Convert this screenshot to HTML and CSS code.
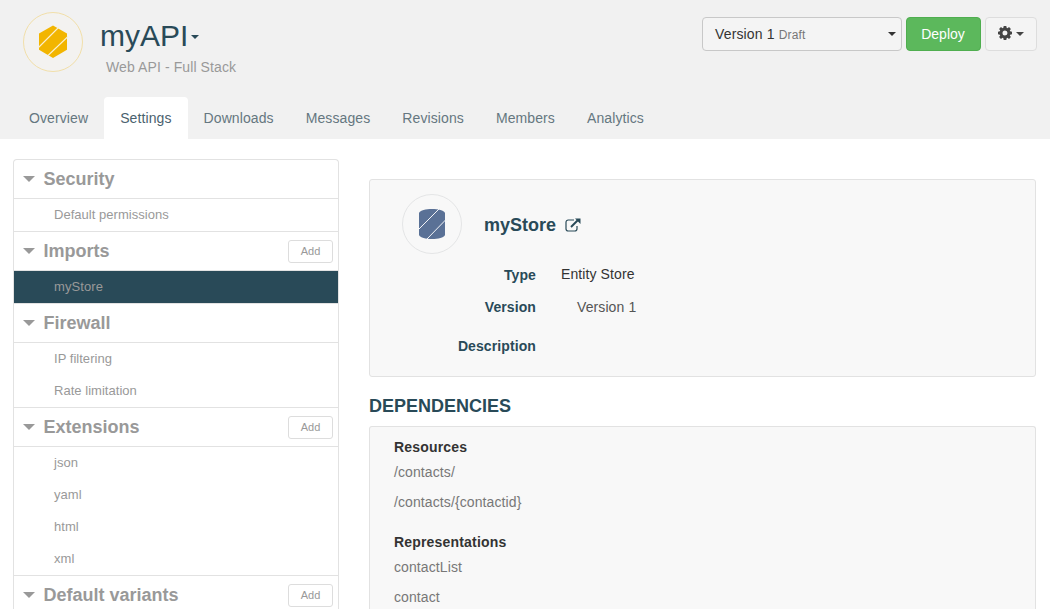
FILE: index.html
```html
<!DOCTYPE html>
<html lang="en">
<head>
<meta charset="utf-8">
<title>myAPI - Settings</title>
<link rel="stylesheet" href="styles.css">
</head>
<body>
<header class="header">
  <div class="header-main">
    <svg class="api-logo" viewBox="0 0 60 60" width="60" height="60">
      <circle cx="30" cy="30" r="29.5" fill="#f3f2f0" stroke="#f1dfa9"/>
      <path d="M30 13.500 44 21.500V37.800L30 46 16 37.800V21.500Z" fill="#f2b500"/>
      <path d="M15.500 35.500 35.500 15.500M25 43.500 45 24.500" stroke="#fbf0cf" stroke-width="1.100"/>
    </svg>
    <div class="identity">
      <h1 class="api-name"><span>myAPI</span><i class="caret"></i></h1>
      <p class="api-kind">Web API - Full Stack</p>
    </div>
    <div class="actions">
      <button class="btn version-select"><span>Version 1 <small>Draft</small></span><i class="caret"></i></button>
      <button class="btn deploy">Deploy</button>
      <button class="btn gear" aria-label="Options">
        <svg viewBox="0 0 14 14" width="14" height="14">
          <path fill="#444" fill-rule="evenodd" d="M5.700 0h2.600l.35 1.800.8.35 1.600-1.100 1.850 1.850-1.100 1.600.35.800 1.850.4v2.600l-1.850.35-.35.800 1.100 1.600-1.850 1.850-1.600-1.100-.8.35L8.300 14H5.700l-.35-1.850-.8-.35-1.600 1.100L1.100 11.050l1.100-1.600-.35-.8L0 8.300V5.700l1.850-.4.35-.8-1.100-1.600L2.950 1.050l1.600 1.100.8-.35ZM7 4.500a2.500 2.500 0 1 0 0 5 2.500 2.500 0 0 0 0-5Z"/>
        </svg>
        <i class="caret"></i>
      </button>
    </div>
  </div>
  <nav class="tabs">
    <a class="tab">Overview</a>
    <a class="tab active">Settings</a>
    <a class="tab">Downloads</a>
    <a class="tab">Messages</a>
    <a class="tab">Revisions</a>
    <a class="tab">Members</a>
    <a class="tab">Analytics</a>
  </nav>
</header>
<main class="content">
  <aside class="sidebar">
    <section class="group">
      <h2 class="group-head"><i class="toggle"></i><span>Security</span></h2>
      <ul class="items"><li>Default permissions</li></ul>
    </section>
    <section class="group">
      <h2 class="group-head"><i class="toggle"></i><span>Imports</span><button class="add">Add</button></h2>
      <ul class="items"><li class="selected">myStore</li></ul>
    </section>
    <section class="group">
      <h2 class="group-head"><i class="toggle"></i><span>Firewall</span></h2>
      <ul class="items"><li>IP filtering</li><li>Rate limitation</li></ul>
    </section>
    <section class="group">
      <h2 class="group-head"><i class="toggle"></i><span>Extensions</span><button class="add">Add</button></h2>
      <ul class="items"><li>json</li><li>yaml</li><li>html</li><li>xml</li></ul>
    </section>
    <section class="group">
      <h2 class="group-head"><i class="toggle"></i><span>Default variants</span><button class="add">Add</button></h2>
    </section>
  </aside>
  <div class="details">
    <section class="panel store">
      <div class="store-head">
        <svg class="store-logo" viewBox="0 0 60 60" width="60" height="60">
          <circle cx="30" cy="30" r="29.500" fill="#f8f8f8" stroke="#e4e5e6"/>
          <path d="M17 19C19 13.700 41 13.700 43 19V41C41 46.300 19 46.300 17 41Z" fill="#5a7196"/>
          <path d="M16.500 35.500 37 15M25 45 43.500 26" stroke="#f2f4f8" stroke-width="1"/>
        </svg>
        <h2 class="store-name">myStore</h2>
        <svg class="external" viewBox="0 0 16 14" width="16" height="14" fill="none" stroke="#294a58">
          <path d="M9 2H3.200A2.200 2.200 0 0 0 1 4.200v6.600A2.200 2.200 0 0 0 3.200 13h6.600A2.200 2.200 0 0 0 12 10.800V8" stroke-width="1.200"/>
          <path d="M6 9 13 2" stroke-width="1.900"/>
          <path d="M10 .5H15.500V6Z" fill="#294a58" stroke="none"/>
        </svg>
      </div>
      <dl class="fields">
        <dt>Type</dt><dd class="type">Entity Store</dd>
        <dt>Version</dt><dd class="version">Version 1</dd>
        <dt class="desc">Description</dt><dd></dd>
      </dl>
    </section>
    <h2 class="section-title">DEPENDENCIES</h2>
    <section class="panel dependencies">
      <h3>Resources</h3>
      <ul><li>/contacts/</li><li>/contacts/{contactid}</li></ul>
      <h3>Representations</h3>
      <ul><li>contactList</li><li>contact</li></ul>
    </section>
  </div>
</main>
</body>
</html>
```
FILE: styles.css
```css
* { box-sizing: border-box; }
body {
  margin: 0;
  height: 609px;
  overflow: hidden;
  background: #fff;
  color: #333;
  font: 14px/20px "Liberation Sans", Arial, sans-serif;
}
h1, h2, h3, p, ul, dl, dd { margin: 0; padding: 0; }
ul { list-style: none; }
button { font: inherit; color: inherit; padding: 0; }
svg { display: block; flex: none; }

.caret {
  flex: none;
  border: 4px solid transparent;
  border-top-color: currentColor;
  border-bottom: 0;
}

.header { height: 139px; background: #f1f1f1; }
.header-main { display: flex; height: 97px; padding: 12px 13px 0 23px; }
.identity { margin-left: 17px; }
.api-name {
  display: flex;
  align-items: center;
  gap: 3px;
  margin-top: 4px;
  color: #294a58;
  font-weight: 400;
  font-size: 30px;
  line-height: 40px;
}
.api-name .caret { margin-top: 2px; }
.api-kind { margin: 1px 0 0 6px; color: #999; letter-spacing: 0.1px; }
.actions { display: flex; gap: 4px; height: 34px; margin: 5px 0 0 auto; }
.btn {
  display: flex;
  align-items: center;
  border: 1px solid #ddd;
  border-radius: 4px;
  background: #f4f4f4;
}
.version-select { justify-content: space-between; width: 200px; padding: 0 5px 0 12px; border-color: #c8c8c8; letter-spacing: 0.15px; }
.version-select small { color: #777; font-size: 12px; }
.deploy { justify-content: center; width: 75px; padding-right: 1px; border-color: #4fae4f; background: #5cb85c; color: #fff; }
.gear { justify-content: center; gap: 4px; width: 52px; padding-right: 1px; color: #444; }
.gear svg { margin-top: -2px; }

.tabs { display: flex; padding-left: 13px; letter-spacing: 0.1px; }
.tab { height: 42px; padding: 0 16px; border-radius: 4px 4px 0 0; line-height: 42px; color: #657780; }
.active { background: #fff; color: #4a626e; }

.content { display: flex; height: 470px; padding: 20px 14px 0 13px; }
.sidebar {
  flex: none;
  width: 326px;
  border: 1px solid #e2e2e2;
  border-bottom: 0;
  border-radius: 4px 4px 0 0;
  overflow: hidden;
  color: #999;
}
.group-head {
  display: flex;
  align-items: center;
  height: 39px;
  padding: 0 5px 0 9px;
  border-bottom: 1px solid #e2e2e2;
  font-size: 18px;
}
.toggle { margin-right: 8.500px; border: 6px solid transparent; border-top-color: #999; border-bottom: 0; }
.add {
  width: 45px;
  height: 23px;
  margin-left: auto;
  border: 1px solid #ddd;
  border-radius: 3px;
  background: #fff;
  font-size: 11px;
  font-weight: 400;
}
.items { border-bottom: 1px solid #e2e2e2; font-size: 13px; }
.items li { height: 32px; padding-left: 40px; line-height: 31px; letter-spacing: 0.03px; }
.items .selected { background: #294a58; letter-spacing: 0.1px; }

.details { display: flex; flex: 1; flex-direction: column; padding-top: 20px; margin-left: 30px; }
.panel { border: 1px solid #e2e2e2; border-radius: 3px; background: #f8f8f8; }
.store { flex: none; height: 198px; }
.store-head { display: flex; align-items: center; padding: 14px 0 0 32px; color: #294a58; }
.store-name { margin: 2px 0 0 22px; font-size: 18px; }
.external { margin: 1px 0 0 9px; }
.fields { display: grid; grid-template-columns: 166px 1fr; grid-auto-rows: 32px; column-gap: 25px; margin-top: 5px; line-height: 32px; letter-spacing: 0.1px; }
.fields dt { text-align: right; color: #294a58; font-weight: bold; }
.type { line-height: 31px; }
.version { padding-left: 16px; color: #555; }
.desc { margin-top: 7px; }
.section-title { margin-top: 19px; font-size: 18px; color: #294a58; }
.dependencies {
  flex: 1;
  min-height: 0;
  margin-top: 10px;
  padding: 10px 24px 0;
  border-bottom: 0;
  border-radius: 3px 3px 0 0;
  overflow: hidden;
}
.dependencies h3 { font-size: 14px; line-height: 20px; letter-spacing: 0.18px; }
.dependencies ul { margin-bottom: 15px; color: #777; letter-spacing: 0.1px; }
.dependencies li { height: 30px; line-height: 30px; }
```
